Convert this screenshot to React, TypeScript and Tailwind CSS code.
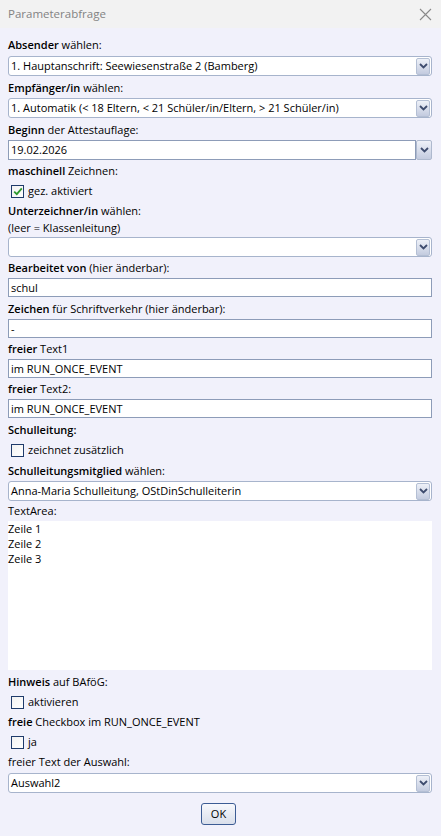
import React from "react";

const font = { fontFamily: '"Open Sans", "Noto Sans", sans-serif' };

function Chevron() {
  return (
    <svg width="9" height="6" viewBox="0 0 9 6">
      <path d="M1 1 L4.5 4.5 L8 1" fill="none" stroke="#3e4c6e" strokeWidth="1.8" />
    </svg>
  );
}

function DropButton() {
  return (
    <div className="w-[14px] h-[17px] mr-[1px] rounded-[2px] border border-[#b4bfd4] bg-gradient-to-b from-[#eef1f8] to-[#c3cbdf] flex items-center justify-center shrink-0">
      <Chevron />
    </div>
  );
}

function Select({ value, className = "" }: { value: string; className?: string }) {
  return (
    <div className={"h-[20px] w-[424px] border border-[#a7b4cc] rounded-[3px] bg-white flex items-center " + className}>
      <div className="flex-1 pl-[2px] text-[11px] text-black truncate leading-[18px]">{value}</div>
      <DropButton />
    </div>
  );
}

function Input({ value, className = "" }: { value: string; className?: string }) {
  return (
    <div className={"h-[19px] w-[424px] border border-[#8d9cb8] bg-white flex items-center pl-[2px] text-[11px] text-black leading-[17px] " + className}>
      {value}
    </div>
  );
}

function Label({ bold, rest, className = "" }: { bold?: string; rest: string; className?: string }) {
  return (
    <div className={"h-[20px] flex items-center text-[11px] text-black whitespace-pre " + className}>
      {bold ? <span className="font-semibold">{bold}</span> : null}
      <span>{rest}</span>
    </div>
  );
}

function Check({ checked, label, className = "" }: { checked?: boolean; label: string; className?: string }) {
  return (
    <div className={"h-[20px] flex items-center pl-[3px] text-[11px] text-black " + className}>
      <div className="w-[13px] h-[13px] border border-[#1f3b6b] bg-gradient-to-br from-[#f2f2f2] to-white flex items-center justify-center">
        {checked ? (
          <svg width="10" height="9" viewBox="0 0 10 9">
            <path d="M1.2 4.6 L3.8 7.2 L8.8 1.4" fill="none" stroke="#2f9a2f" strokeWidth="1.8" />
          </svg>
        ) : null}
      </div>
      <span className="ml-[4px]">{label}</span>
    </div>
  );
}

export default function App() {
  return (
    <div style={font} className="w-[441px] h-[836px] bg-[#f1f1fb] flex flex-col overflow-hidden">
      <div className="h-[28px] bg-[#f2f2f2] flex items-center justify-between pl-[8px] pr-[9px] shrink-0">
        <span className="text-[11.5px] text-[#838383]">Parameterabfrage</span>
        <svg width="13" height="13" viewBox="0 0 13 13">
          <path d="M1 1 L12 12 M12 1 L1 12" stroke="#8a8a8a" strokeWidth="1.1" fill="none" />
        </svg>
      </div>
      <div className="flex flex-col pl-[8px] pt-[7px]">
        <Label bold="Absender" rest=" wählen:" />
        <Select className="mt-[1px]" value="1. Hauptanschrift: Seewiesenstraße 2 (Bamberg)" />
        <Label className="mt-[2px]" bold="Empfänger/in" rest=" wählen:" />
        <Select value="1. Automatik (< 18 Eltern, < 21 Schüler/in/Eltern, > 21 Schüler/in)" />
        <Label className="mt-[2px]" bold="Beginn" rest=" der Attestauflage:" />
        <div className="h-[20px] w-[424px] flex">
          <div className="flex-1 border border-[#8d9cb8] bg-white flex items-center pl-[2px] text-[11px] text-black">19.02.2026</div>
          <div className="w-[16px] h-[20px] rounded-[2px] border border-[#aeb9ce] bg-gradient-to-b from-[#eef1f8] to-[#c3cbdf] flex items-center justify-center">
            <Chevron />
          </div>
        </div>
        <Label className="mt-[1px]" bold="maschinell" rest=" Zeichnen:" />
        <Check checked label="gez. aktiviert" />
        <div className="flex flex-col text-[11px] text-black leading-[17px] h-[36px] justify-center">
          <div>
            <span className="font-semibold">Unterzeichner/in</span> wählen:
          </div>
          <div>(leer = Klassenleitung)</div>
        </div>
        <Select value="" />
        <Label className="mt-[1px]" bold="Bearbeitet von" rest=" (hier änderbar):" />
        <Input value="schul" />
        <Label className="mt-[2px]" bold="Zeichen" rest=" für Schriftverkehr (hier änderbar):" />
        <Input value="-" />
        <Label className="mt-[1px]" bold="freier" rest=" Text1" />
        <Input value="im RUN_ONCE_EVENT" />
        <Label className="mt-[1px]" bold="freier" rest=" Text2:" />
        <Input value="im RUN_ONCE_EVENT" />
        <Label className="mt-[2px]" bold="Schulleitung:" rest="" />
        <Check label="zeichnet zusätzlich" />
        <Label className="mt-[1px]" bold="Schulleitungsmitglied" rest=" wählen:" />
        <Select value="Anna-Maria Schulleitung, OStDinSchulleiterin" />
        <Label rest="TextArea:" />
        <div className="h-[149px] w-[424px] bg-white text-[11px] text-black leading-[15px]">
          <div>Zeile 1</div>
          <div>Zeile 2</div>
          <div>Zeile 3</div>
        </div>
        <Label className="mt-[2px]" bold="Hinweis" rest=" auf BAföG:" />
        <Check label="aktivieren" />
        <Label bold="freie" rest=" Checkbox im RUN_ONCE_EVENT" />
        <Check label="ja" />
        <Label rest="freier Text der Auswahl:" />
        <Select className="mt-[1px]" value="Auswahl2" />
        <div className="w-[424px] flex justify-center mt-[10px]">
          <div className="w-[35px] h-[22px] ml-[-3px] rounded-[3px] border border-[#3c5c94] bg-gradient-to-b from-[#f7f8fc] to-[#d9dfeb] flex items-center justify-center text-[11px] text-black">
            OK
          </div>
        </div>
      </div>
    </div>
  );
}
